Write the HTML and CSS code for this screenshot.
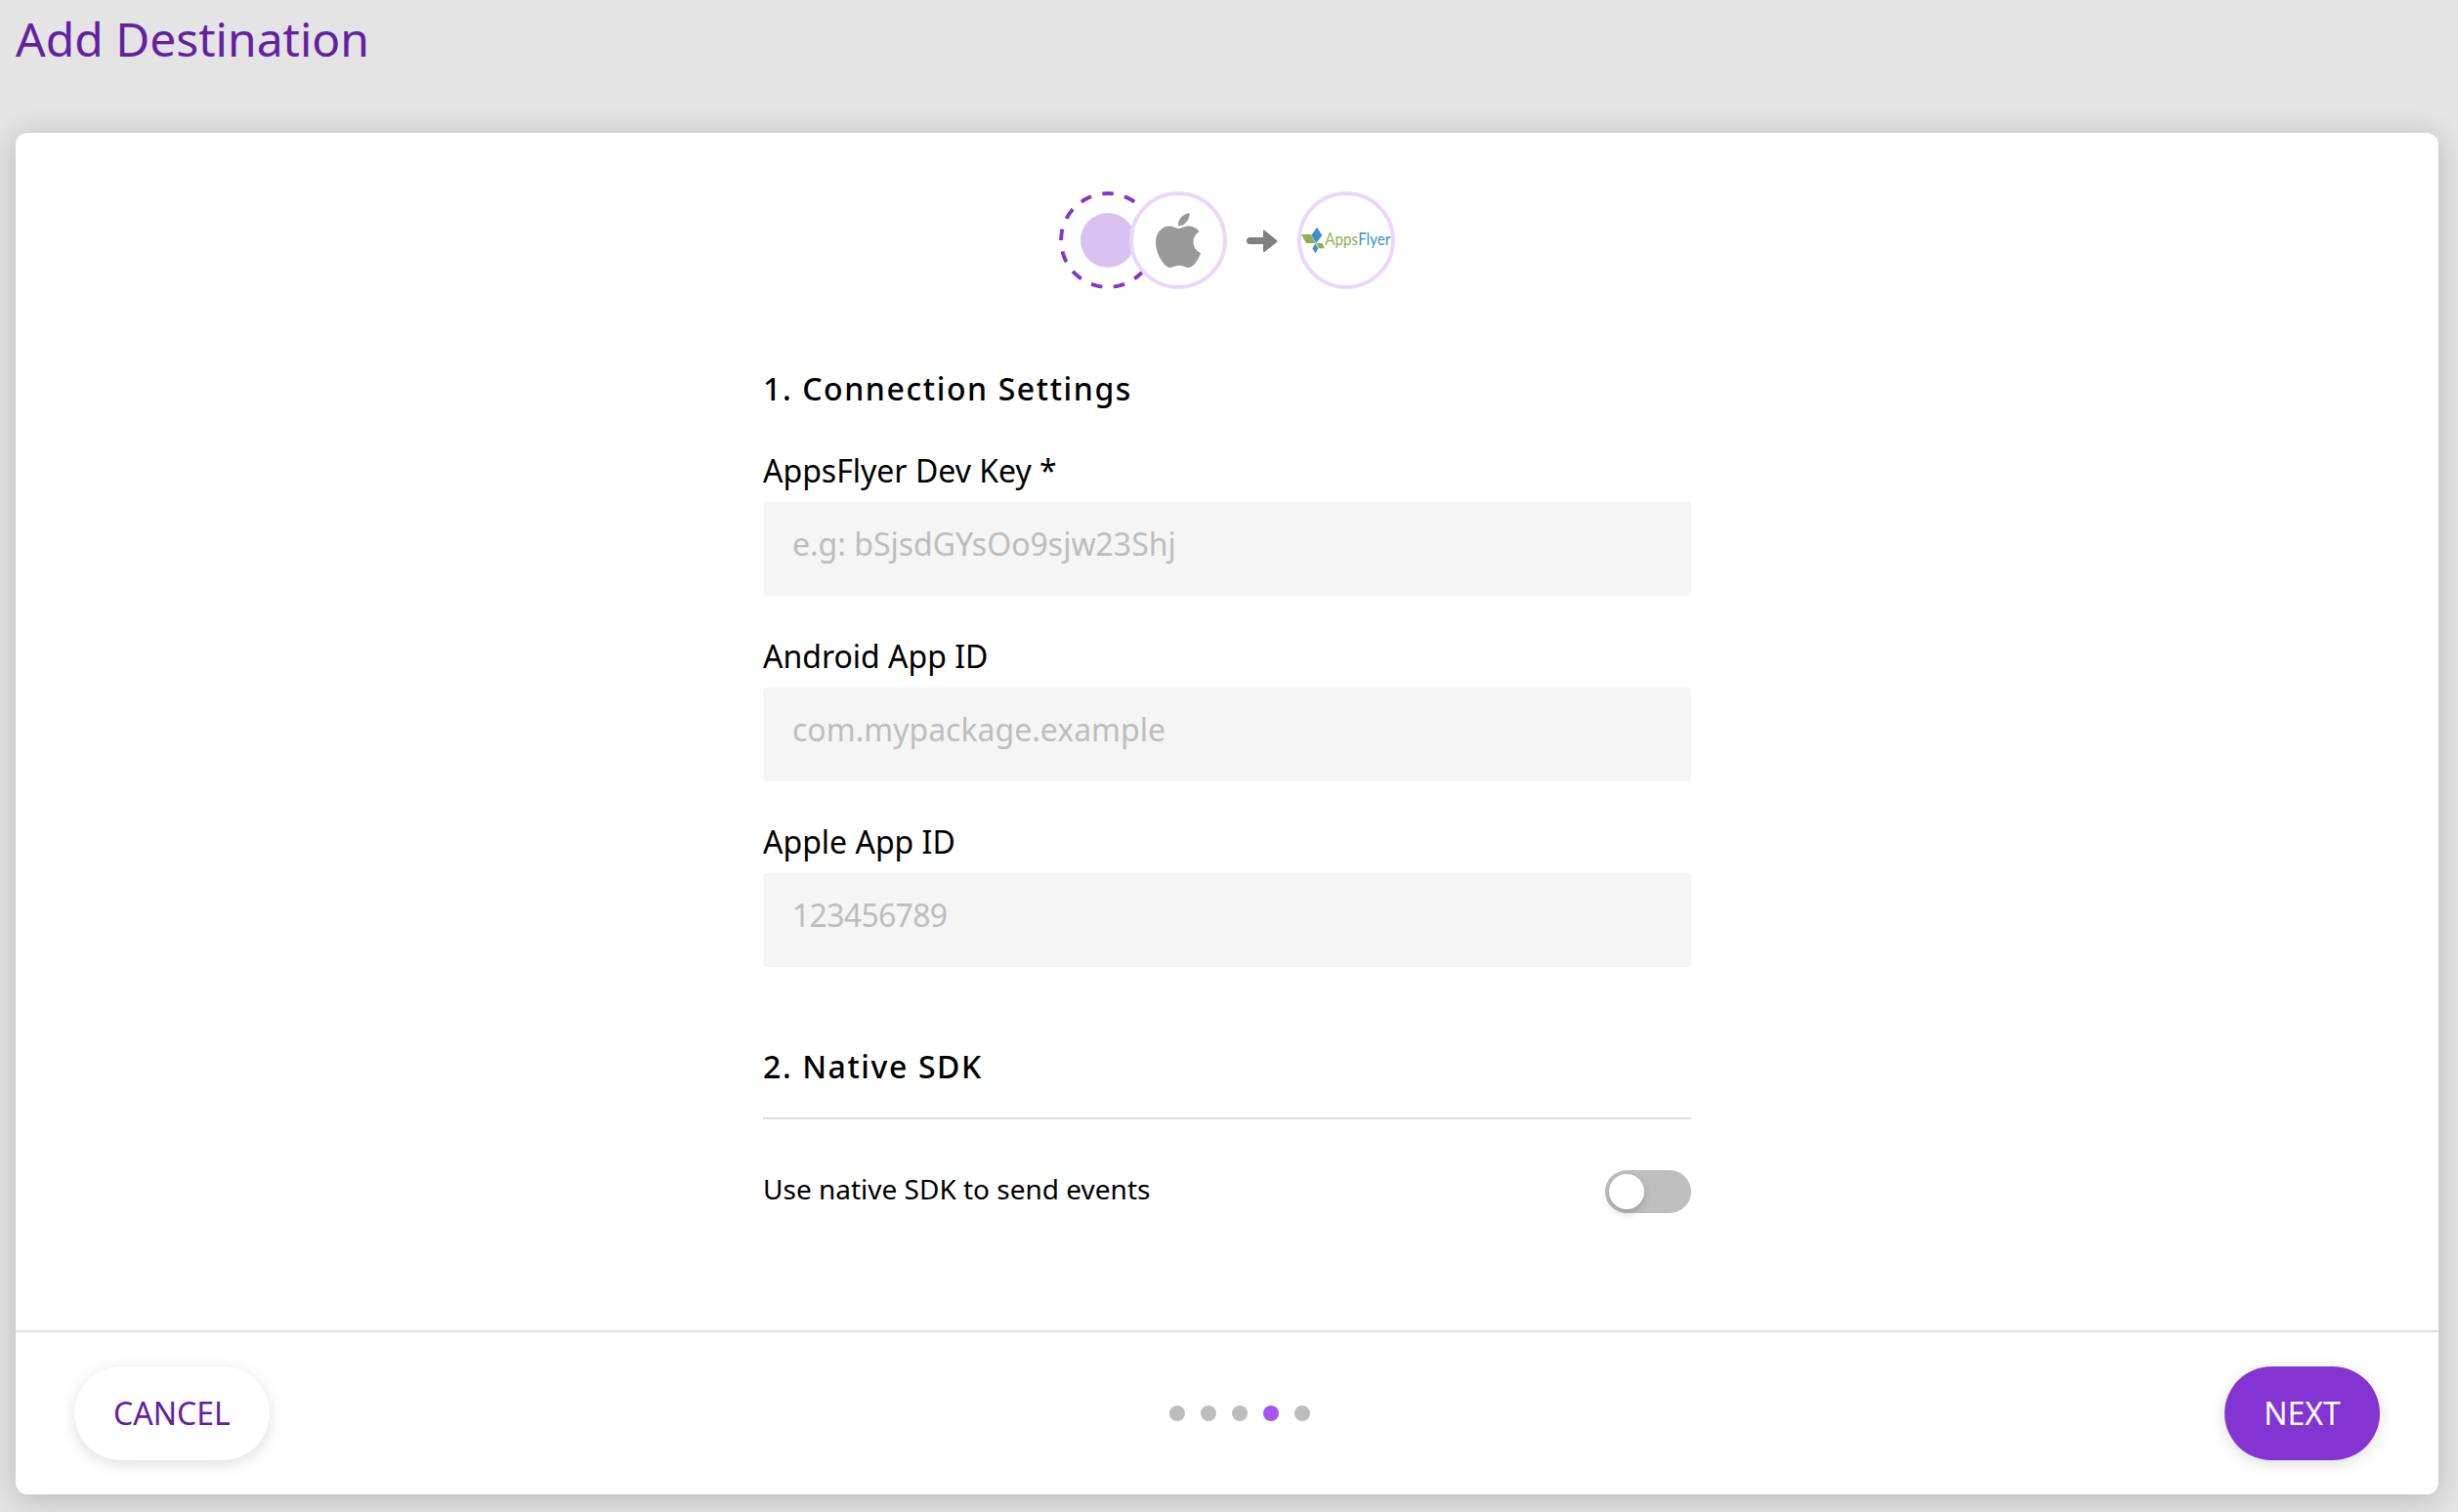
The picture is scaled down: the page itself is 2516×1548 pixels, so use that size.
FILE: index.html
```html
<!DOCTYPE html>
<html lang="en">
<head>
<meta charset="utf-8">
<title>Add Destination</title>
<link rel="stylesheet" href="styles.css">
</head>
<body>
<h1 class="page-title">Add Destination</h1>
<main class="card">
  <div class="content">
    <div class="flow">
      <svg class="node source" viewBox="0 0 100 100">
        <circle cx="50" cy="50" r="28" fill="#d9c2f2"/>
        <circle cx="50" cy="50" r="48" fill="none" stroke="#8434d2" stroke-width="4" pathLength="260" stroke-dasharray="10 10" stroke-dashoffset="5" transform="rotate(-90 50 50)"/>
      </svg>
      <div class="node ring platform">
        <svg class="apple" viewBox="4 32 376 448" preserveAspectRatio="none"><path fill="#999" d="M318.7 268.7c-.2-36.7 16.4-64.4 50-84.8-18.8-26.9-47.2-41.7-84.7-44.6-35.5-2.8-74.3 20.7-88.5 20.7-15 0-49.4-19.7-76.4-19.7C63.3 141.2 4 184.8 4 273.5q0 39.3 14.4 81.2c12.8 36.7 59 126.7 107.2 125.2 25.2-.6 43-17.9 75.8-17.9 31.8 0 48.3 17.9 76.4 17.9 48.6-.7 90.4-82.5 102.6-119.3-65.2-30.7-61.7-90-61.7-91.9zm-56.6-164.2c27.3-32.4 24.8-61.9 24-72.5-24.1 1.4-52 16.4-67.9 34.9-17.5 19.8-27.8 44.3-25.6 71.9 26.1 2 49.9-11.4 69.5-34.3z"/></svg>
      </div>
      <svg class="arrow" viewBox="0 0 32 24"><path fill="#808080" d="M3.500 8H17V1.500Q17 0 18.300 .8L31 11Q32 12 31 12.900L18.300 23Q17 23.800 17 22.500V15H3.500A3.500 3.500 0 0 1 3.500 8Z"/></svg>
      <div class="node ring">
        <svg class="logo" viewBox="816 60 276 276">
          <path fill="#8fb04e" d="M816 180H845L860 207H831Z"/>
          <path fill="#3f8fcd" d="M864 158L880 183L862 207L847 183Z"/>
          <path fill="#8fb04e" d="M862 207H880L888 223H870Z"/>
          <path fill="#3f8fcd" d="M859 208L868 223L859 238L850 223Z"/>
          <text class="logo-text" x="889" y="213" textLength="201" lengthAdjust="spacingAndGlyphs"><tspan fill="#8fb04e">Apps</tspan><tspan fill="#3f8fcd">Flyer</tspan></text>
        </svg>
      </div>
    </div>
    <form class="form">
      <h2 class="heading">1. Connection Settings</h2>
      <div class="fields">
        <label class="field">AppsFlyer Dev Key *<input class="input" type="text" placeholder="e.g: bSjsdGYsOo9sjw23Shj"></label>
        <label class="field">Android App ID<input class="input" type="text" placeholder="com.mypackage.example"></label>
        <label class="field">Apple App ID<input class="input numeric" type="text" placeholder="123456789"></label>
      </div>
      <h2 class="heading ruled">2. Native SDK</h2>
      <div class="toggle-row">
        <span>Use native SDK to send events</span>
        <span class="switch"><span class="knob"></span></span>
      </div>
    </form>
  </div>
  <footer class="footer">
    <button class="button cancel">CANCEL</button>
    <div class="dots"><i class="dot"></i><i class="dot"></i><i class="dot"></i><i class="dot active"></i><i class="dot"></i></div>
    <button class="button next">NEXT</button>
  </footer>
</main>
</body>
</html>
```
FILE: styles.css
```css
* { box-sizing: border-box; }
body {
  margin: 0;
  height: 1548px;
  padding: 7px 20px 18px 16px;
  display: flex;
  flex-direction: column;
  overflow: hidden;
  background: #e4e4e4;
  color: #000;
  font-family: "Noto Sans", sans-serif;
  font-size: 32px;
  line-height: 44px;
}
.page-title {
  margin: 0 0 63px;
  font-size: 48px;
  line-height: 66px;
  font-weight: 400;
  color: #6320a0;
}
.card {
  flex: 1;
  display: flex;
  flex-direction: column;
  background: #fff;
  border-radius: 12px;
  box-shadow: 0 4px 30px rgba(0, 0, 0, .2);
}
.content {
  flex: 1;
  display: flex;
  flex-direction: column;
  align-items: center;
  padding-top: 60px;
}
.flow { display: flex; align-items: center; height: 100px; }
.node { width: 100px; height: 100px; border-radius: 50%; }
.ring {
  display: flex;
  align-items: center;
  justify-content: center;
  background: #fff;
  border: 4px solid #ead7fb;
}
.platform { z-index: 1; margin-left: -28px; }
.apple { width: 46px; height: 56px; }
.arrow { width: 32px; height: 24px; margin: 2px 20px 0; }
.logo { width: 92px; height: 92px; overflow: visible; }
.logo-text { font-family: Lato, sans-serif; font-size: 49px; }
.form { width: 950px; margin-top: 80px; }
.heading {
  margin: 0;
  font-size: 32px;
  line-height: 44px;
  font-weight: 540;
  letter-spacing: 1.6px;
}
.fields {
  display: flex;
  flex-direction: column;
  gap: 40px;
  margin: 40px 0 80px;
}
.field { display: flex; flex-direction: column; gap: 10px; height: 150px; }
.input {
  width: 100%;
  height: 96px;
  padding: 0 30px 12px;
  border: 0;
  border-radius: 4px;
  background: #f5f5f5;
  font: inherit;
}
.input::placeholder { color: #bdbdbd; opacity: 1; }
.numeric { letter-spacing: -.7px; }
.ruled { height: 76px; border-bottom: 2px solid #dedede; }
.toggle-row {
  display: flex;
  justify-content: space-between;
  align-items: flex-start;
  margin-top: 52px;
  font-size: 28px;
  line-height: 38px;
}
.switch {
  width: 88px;
  height: 44px;
  padding: 4px;
  border-radius: 22px;
  background: #bfbfbf;
}
.knob {
  display: block;
  width: 36px;
  height: 36px;
  border-radius: 50%;
  background: #fff;
  box-shadow: 0 4px 8px rgba(0, 35, 11, .2);
}
.footer {
  display: flex;
  align-items: center;
  justify-content: space-between;
  height: 168px;
  padding: 0 60px;
  border-top: 2px solid #dedede;
}
.button {
  height: 96px;
  padding: 0;
  border: 0;
  border-radius: 48px;
  font: inherit;
  box-shadow: 0 4px 16px rgba(0, 0, 0, .13);
}
.cancel { width: 200px; background: #fff; color: #6320a0; }
.next { width: 159px; background: #8434d2; color: #fff; }
.dots { display: flex; gap: 16px; margin-right: 15px; }
.dot { width: 16px; height: 16px; border-radius: 50%; background: #bdbdbd; }
.active { background: #a855f0; }
```
